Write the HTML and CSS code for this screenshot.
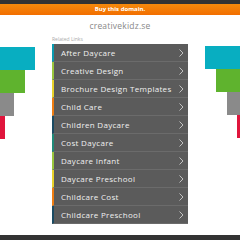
FILE: index.html
```html
<!DOCTYPE html>
<html>
<head>
<meta charset="utf-8">
<link rel="stylesheet" href="styles.css">
</head>
<body>
<div class="topbar"></div>
<div class="buybar">Buy this domain.</div>
<div class="title">creativekidz.se</div>
<div class="main">
  <div class="deco deco-left">
    <div class="bar cyan w35"></div>
    <div class="bar green w25"></div>
    <div class="bar gray w14"></div>
    <div class="bar red w5"></div>
  </div>
  <div class="center">
    <div class="label">Related Links</div>
    <ul class="menu">
      <li class="c1">After Daycare<svg class="chev" viewBox="0 0 5 8"><polyline points="0.5,0.5 4,4 0.5,7.5"/></svg></li>
      <li class="c2">Creative Design<svg class="chev" viewBox="0 0 5 8"><polyline points="0.5,0.5 4,4 0.5,7.5"/></svg></li>
      <li class="c3">Brochure Design Templates<svg class="chev" viewBox="0 0 5 8"><polyline points="0.5,0.5 4,4 0.5,7.5"/></svg></li>
      <li class="c4">Child Care<svg class="chev" viewBox="0 0 5 8"><polyline points="0.5,0.5 4,4 0.5,7.5"/></svg></li>
      <li class="c5">Children Daycare<svg class="chev" viewBox="0 0 5 8"><polyline points="0.5,0.5 4,4 0.5,7.5"/></svg></li>
      <li class="c6">Cost Daycare<svg class="chev" viewBox="0 0 5 8"><polyline points="0.5,0.5 4,4 0.5,7.5"/></svg></li>
      <li class="c2">Daycare Infant<svg class="chev" viewBox="0 0 5 8"><polyline points="0.5,0.5 4,4 0.5,7.5"/></svg></li>
      <li class="c3">Daycare Preschool<svg class="chev" viewBox="0 0 5 8"><polyline points="0.5,0.5 4,4 0.5,7.5"/></svg></li>
      <li class="c4">Childcare Cost<svg class="chev" viewBox="0 0 5 8"><polyline points="0.5,0.5 4,4 0.5,7.5"/></svg></li>
      <li class="c5">Childcare Preschool<svg class="chev" viewBox="0 0 5 8"><polyline points="0.5,0.5 4,4 0.5,7.5"/></svg></li>
    </ul>
  </div>
  <div class="deco deco-right">
    <div class="bar cyan w35"></div>
    <div class="bar green w24"></div>
    <div class="bar gray w13"></div>
    <div class="bar red w3"></div>
  </div>
</div>
<div class="footer"></div>
</body>
</html>
```
FILE: styles.css
```css
html, body { margin: 0; padding: 0; }
body {
  width: 240px;
  height: 240px;
  overflow: hidden;
  background: #fff;
  font-family: "Open Sans", "Liberation Sans", sans-serif;
  display: flex;
  flex-direction: column;
}
.topbar { height: 4px; background: #333; }
.buybar {
  height: 11px;
  background: linear-gradient(#f58a0c, #f26e00);
  color: #fff;
  font-size: 6px;
  font-weight: 700;
  text-align: center;
  line-height: 11px;
}
.title {
  height: 20px;
  line-height: 22px;
  text-align: center;
  color: #888;
  font-size: 8.5px;
  letter-spacing: 0.2px;
}
.main {
  display: flex;
  flex: 1;
}
.deco {
  width: 52px;
  display: flex;
  flex-direction: column;
  padding-top: 12px;
}
.deco-left { align-items: flex-start; }
.deco-right { align-items: flex-end; padding-top: 11px; }
.bar { height: 23px; }
.cyan { background: #08aec1; }
.green { background: #5fb32e; }
.gray { background: #8a8a8a; }
.red { background: #e0153c; }
.w35 { width: 35px; }
.w25 { width: 25px; }
.w24 { width: 24px; }
.w14 { width: 14px; }
.w13 { width: 13px; }
.w5 { width: 5px; }
.w3 { width: 3px; }
.center { width: 136px; display: flex; flex-direction: column; }
.label {
  height: 9px;
  font-size: 5px;
  line-height: 8px;
  color: #aaa;
}
.menu {
  list-style: none;
  margin: 0;
  padding: 0;
  background: #5b5b5b;
}
.menu li {
  height: 17px;
  border-bottom: 1px solid #6b6b6b;
  border-left: 2px solid #08aec1;
  display: flex;
  align-items: center;
  justify-content: space-between;
  padding: 0 4px 0 7px;
  color: #f0f0f0;
  font-size: 8px;
  font-weight: 500;
  letter-spacing: 0.3px;
}
.menu li.c1 { border-left-color: #0a9bb0; }
.menu li.c2 { border-left-color: #9ac63c; }
.menu li.c3 { border-left-color: #e8d22a; }
.menu li.c4 { border-left-color: #ef7d12; }
.menu li.c5 { border-left-color: #1b4b63; }
.menu li.c6 { border-left-color: #1f8a78; }
.chev {
  width: 5px;
  height: 8px;
  fill: none;
  stroke: #ddd;
  stroke-width: 0.8;
}
.footer { height: 5px; background: #333; }
```
